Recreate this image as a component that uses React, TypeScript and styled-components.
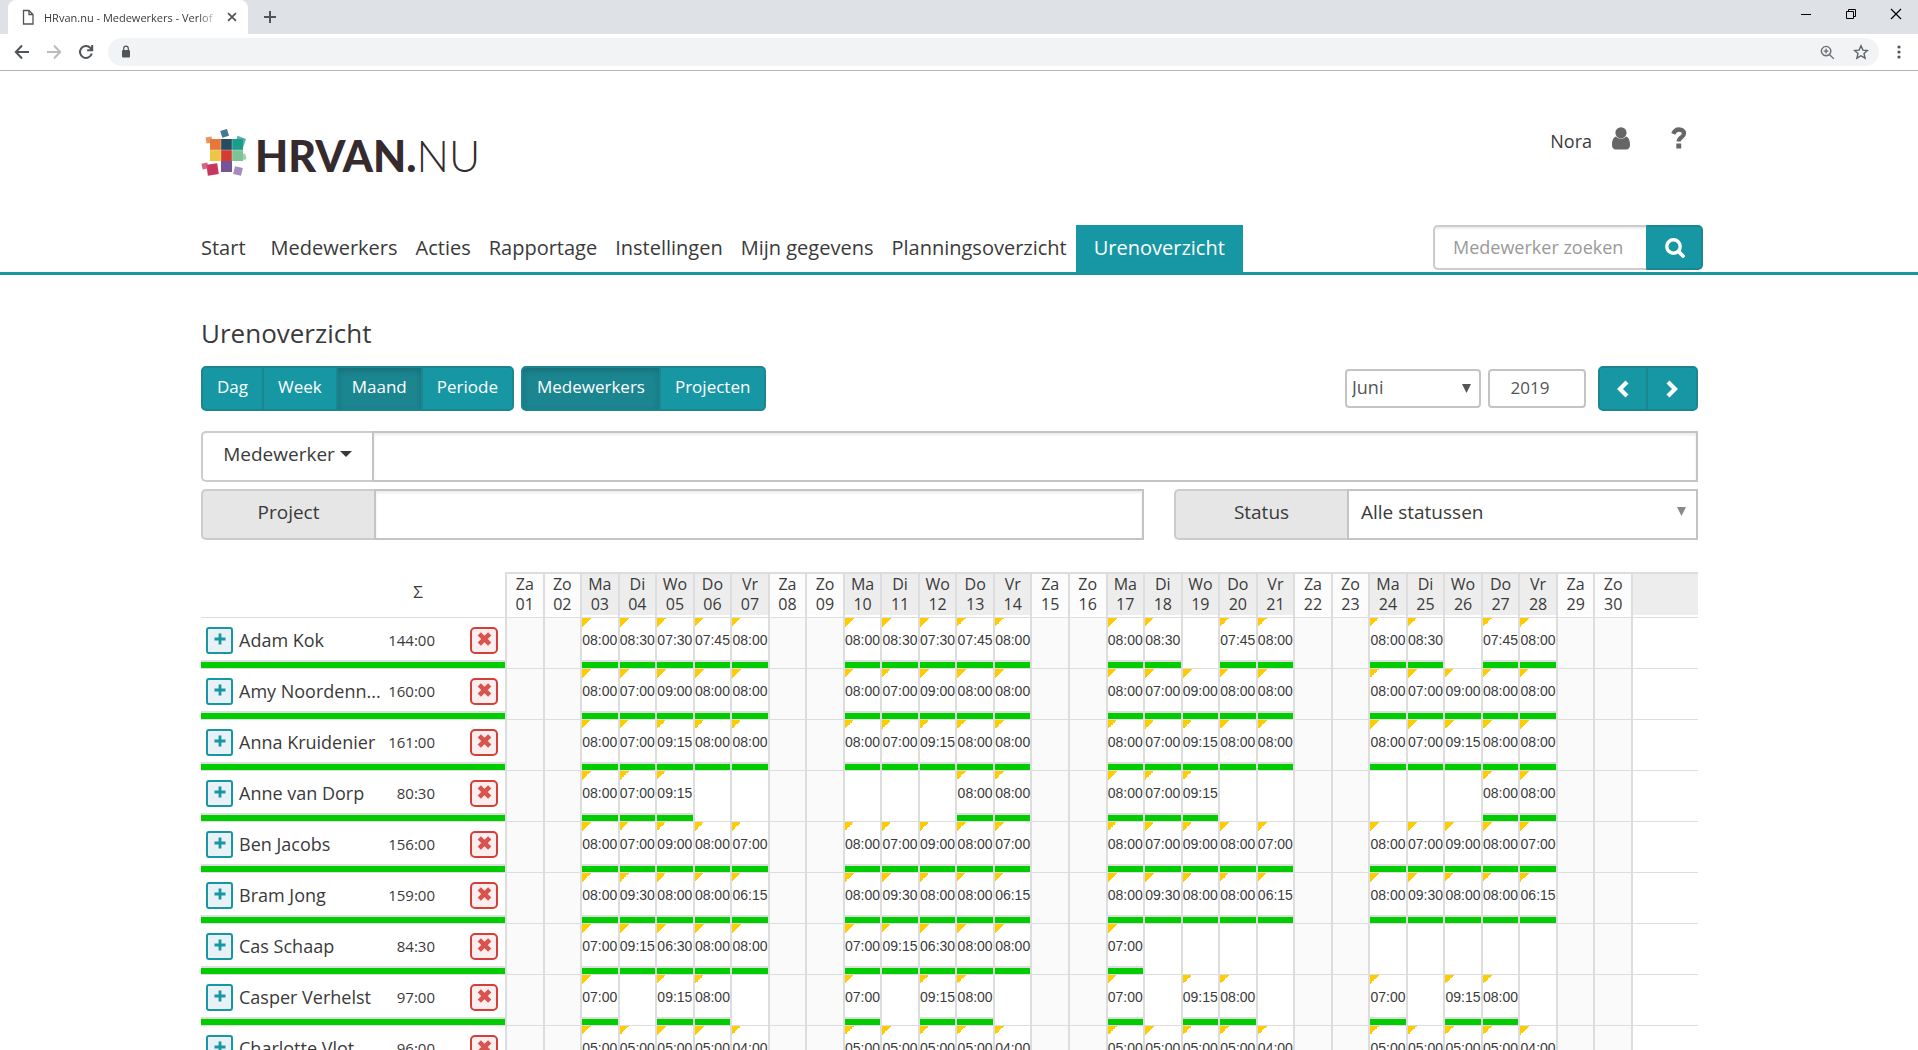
import React from 'react';
import styled, { createGlobalStyle } from 'styled-components';

const teal = '#1797a4';
const tealDark = '#1b8590';
const line = '#dddddd';
const field = '#c4c4c4';
const green = '#00cc00';
const ink = '#3a3a3a';

const GlobalStyle = createGlobalStyle`
  * { box-sizing: border-box; }
  body { margin: 0; background: #fff; color: ${ink}; font-family: "Open Sans", "Noto Sans", sans-serif; }
  button, input, select { font-family: inherit; color: inherit; }
`;

const Screen = styled.div`
  display: flex;
  flex-direction: column;
  height: 100vh;
  overflow: hidden;
`;

/* ---------- browser frame ---------- */
const TabStrip = styled.div`
  display: flex;
  align-items: stretch;
  height: 34px;
  flex: none;
  padding-left: 8px;
  background: #dee1e6;
`;
const Tab = styled.div`
  display: flex;
  align-items: center;
  width: 240px;
  padding: 0 9px 0 12px;
  background: #fff;
  border-radius: 8px 8px 0 0;
`;
const TabTitle = styled.span`
  flex: 1;
  margin: 0 6px 0 8px;
  overflow: hidden;
  white-space: nowrap;
  font-size: 11px;
  mask-image: linear-gradient(90deg, #000 88%, transparent);
`;
const ChromeButton = styled.button<{ $w: number }>`
  display: flex;
  align-items: center;
  justify-content: center;
  width: ${p => p.$w}px;
  padding: 0;
  border: 0;
  background: none;
`;
const WindowButtons = styled.div`
  display: flex;
  margin-left: auto;
  padding-bottom: 6px;
`;
const Toolbar = styled.div`
  display: flex;
  align-items: center;
  flex: none;
  height: 37px;
  padding-left: 6px;
  border-bottom: 1px solid #b4b4b4;
`;
const Address = styled.div`
  display: flex;
  align-items: center;
  justify-content: space-between;
  flex: 1;
  height: 28px;
  margin-left: 6px;
  padding: 0 1px 0 12px;
  border-radius: 14px;
  background: #f1f3f4;
`;
const AddressActions = styled.div`
  display: flex;
`;

/* ---------- page ---------- */
const Page = styled.main`
  flex: 1;
  min-height: 0;
  overflow: hidden;
`;
const Band = styled.div`
  padding-right: 19px;
`;
const Container = styled.div`
  max-width: 1497px;
  margin: 0 auto;
`;
const Header = styled(Container)`
  display: flex;
  justify-content: space-between;
  height: 154px;
  padding-top: 56px;
`;
const Logo = styled.a`
  display: flex;
  align-items: flex-start;
  gap: 8px;
  padding-top: 2px;
  color: #352b2e;
  text-decoration: none;
`;
const LogoText = styled.span`
  font-family: Lato, sans-serif;
  font-size: 43px;
  font-weight: 900;
  line-height: 54px;
`;
const LogoLight = styled.span`
  font-weight: 300;
`;
const UserArea = styled.div`
  display: flex;
  align-items: flex-start;
  gap: 20px;
`;
const UserLink = styled.a`
  display: flex;
  align-items: flex-start;
  gap: 20px;
  padding-right: 10px;
  color: #666;
  text-decoration: none;
`;
const UserName = styled.span`
  color: ${ink};
  font-size: 18px;
  line-height: 28px;
`;
const HelpButton = styled.button`
  display: flex;
  justify-content: center;
  width: 38px;
  padding: 0;
  border: 0;
  background: none;
  color: #666;
`;
const NavBand = styled(Band)`
  border-bottom: 3px solid ${teal};
`;
const NavRow = styled(Container)`
  display: flex;
  justify-content: space-between;
  height: 47px;
`;
const Nav = styled.nav`
  display: flex;
  margin-left: -9px;
`;
const NavLink = styled.a<{ $active?: boolean; $first?: boolean }>`
  padding: 0 ${p => (p.$active ? 18 : 9)}px;
  margin-right: ${p => (p.$first ? 7 : 0)}px;
  background: ${p => (p.$active ? teal : 'none')};
  color: ${p => (p.$active ? '#fff' : ink)};
  font-size: 20px;
  line-height: 46px;
  text-decoration: none;
  white-space: nowrap;
`;
const Search = styled.form`
  display: flex;
  width: 270px;
  height: 45px;
  margin-right: -5px;
`;
const SearchInput = styled.input`
  flex: 1;
  min-width: 0;
  padding: 0 18px 2px;
  border: 2px solid #ccc;
  border-right: 0;
  border-radius: 5px 0 0 5px;
  font-size: 18px;
  box-shadow: inset 0 2px 2px rgba(0, 0, 0, 0.07);
  &::placeholder { color: #999; }
`;
const SearchButton = styled.button`
  display: flex;
  align-items: center;
  justify-content: center;
  width: 57px;
  border: 2px solid ${tealDark};
  border-left-color: ${teal};
  border-radius: 0 5px 5px 0;
  background: ${teal};
  color: #fff;
`;

const Title = styled.h1`
  margin: 0;
  padding: 40px 0 15px;
  font-size: 26px;
  font-weight: 400;
  line-height: 36px;
`;
const Controls = styled.div`
  display: flex;
  align-items: center;
  gap: 7px;
  height: 45px;
  margin-bottom: 20px;
`;
const ButtonGroup = styled.div`
  display: flex;
  height: 45px;
  overflow: hidden;
  border: 2px solid ${tealDark};
  border-radius: 5px;
  background: ${teal};
`;
const GroupButton = styled.button<{ $active?: boolean; $square?: boolean }>`
  display: flex;
  align-items: center;
  justify-content: center;
  min-width: ${p => (p.$square ? 48 : 0)}px;
  padding: 0 ${p => (p.$square ? 0 : 14)}px ${p => (p.$square ? 0 : 4)}px;
  border: 0;
  border-right: 2px solid ${tealDark};
  background: ${p => (p.$active ? tealDark : teal)};
  box-shadow: ${p => (p.$active ? 'inset 0 3px 6px rgba(0,0,0,.16)' : 'none')};
  color: #fff;
  font-size: 17px;
  font-weight: 500;
  &:last-child { border-right: 0; }
`;
const PeriodPicker = styled.div`
  display: flex;
  align-items: center;
  gap: 7px;
  margin-left: auto;
`;
const NextPrev = styled(ButtonGroup)`
  margin-left: 5px;
`;
const SelectWrap = styled.div<{ $w?: number }>`
  position: relative;
  ${p => (p.$w ? `width: ${p.$w}px;` : 'flex: 1;')}
`;
const MonthSelect = styled.select`
  width: 100%;
  height: 39px;
  padding: 0 24px 3px 5px;
  border: 2px solid ${field};
  border-radius: 4px;
  appearance: none;
  background: #fff;
  color: #555;
  font-size: 18px;
`;
const Arrow = styled.span<{ $gray?: boolean }>`
  position: absolute;
  top: 0;
  bottom: 0;
  right: ${p => (p.$gray ? 12 : 10)}px;
  display: flex;
  align-items: center;
  padding-bottom: ${p => (p.$gray ? 6 : 0)}px;
  color: ${p => (p.$gray ? '#888' : '#555')};
  pointer-events: none;
`;
const YearInput = styled.input`
  width: 98px;
  height: 39px;
  padding: 0 14px 3px 0;
  border: 2px solid ${field};
  border-radius: 4px;
  color: #555;
  font-size: 17px;
  text-align: center;
`;

const Filters = styled.div`
  display: flex;
  flex-direction: column;
  gap: 7px;
  margin-bottom: 32px;
`;
const FilterRow = styled.div`
  display: flex;
  gap: 30px;
`;
const FilterGroup = styled.div<{ $w?: number }>`
  display: flex;
  height: 51px;
  ${p => (p.$w ? `flex: 0 0 ${p.$w}px;` : 'flex: 1;')}
  font-size: 19px;
`;
const Dropdown = styled.button`
  display: flex;
  align-items: center;
  justify-content: center;
  gap: 5px;
  width: 171px;
  padding: 0 0 6px;
  border: 2px solid #ccc;
  border-right: 0;
  border-radius: 5px 0 0 5px;
  background: #fff;
  font-size: 19px;
`;
const FilterLabel = styled.label`
  width: 173px;
  padding-bottom: 4px;
  border: 2px solid #ccc;
  border-right: 0;
  border-radius: 5px 0 0 5px;
  background: #e6e6e6;
  line-height: 43px;
  text-align: center;
`;
const FilterInput = styled.input`
  flex: 1;
  min-width: 0;
  padding: 0 12px;
  border: 2px solid ${field};
  border-radius: 0;
  font-size: 19px;
  box-shadow: inset 0 2px 3px rgba(0, 0, 0, 0.08);
`;
const StatusSelect = styled.select`
  width: 100%;
  height: 51px;
  padding: 0 24px 5px 12px;
  border: 2px solid ${field};
  border-radius: 0;
  appearance: none;
  background: #fff;
  font-size: 19px;
`;

/* ---------- hours table ---------- */
const Table = styled.table`
  width: 100%;
  table-layout: fixed;
  border-spacing: 0;
`;
const Col = styled.col<{ $w?: number }>`
  ${p => (p.$w ? `width: ${p.$w}px;` : '')}
`;
const Sum = styled.th`
  padding: 0 15px 6px 0;
  font-size: 17px;
  font-weight: 400;
  text-align: right;
`;
const LeftHead = styled.td`
  padding: 0;
`;
const DayHead = styled.th<{ $weekend?: boolean }>`
  height: 45px;
  padding: 0 0 2px;
  border-top: 2px solid ${line};
  border-left: 2px solid ${line};
  background: ${p => (p.$weekend ? '#fcfcfc' : '#ededed')};
  background-clip: padding-box;
  box-shadow: inset 0 -2px #fff;
  font-size: 16px;
  font-weight: 400;
  line-height: 20px;
  vertical-align: top;
`;
const NameCell = styled.th`
  padding: 0;
  border-top: 1px solid ${line};
  font-weight: 400;
  text-align: left;
`;
const PlainCell = styled.td`
  padding: 0;
  border-top: 1px solid ${line};
`;
const DayCell = styled.td<{ $weekend?: boolean }>`
  height: 51px;
  padding: 0;
  border-top: 1px solid ${line};
  border-left: 2px solid ${line};
  background: ${p => (p.$weekend ? '#fafafa' : '#fff')};
`;
const Marked = styled.div`
  display: flex;
  align-items: center;
  height: 50px;
  border-bottom: 6px solid ${green};
  box-shadow: inset 0 -2px ${line};
`;
const NameBox = styled(Marked)`
  gap: 6px;
  padding-left: 5px;
`;
const TotalBox = styled(Marked)`
  justify-content: flex-end;
  padding-right: 3px;
  font-size: 15px;
`;
const DeleteBox = styled(Marked)`
  justify-content: flex-end;
  padding-right: 7px;
`;
const HoursBox = styled(Marked)`
  justify-content: center;
  background: linear-gradient(to bottom right, #fc0 50%, transparent 50%) 0 0 / 9px 9px no-repeat;
  font-family: "Liberation Sans", Arial, sans-serif;
  font-size: 14px;
  white-space: nowrap;
`;
const Name = styled.span`
  white-space: nowrap;
  font-size: 18px;
  line-height: 26px;
`;
const SquareButton = styled.button<{ $danger?: boolean }>`
  display: flex;
  align-items: center;
  justify-content: center;
  flex: none;
  width: ${p => (p.$danger ? 28 : 27)}px;
  height: 27px;
  padding: 0 0 2px;
  border: 2px solid ${p => (p.$danger ? '#d43f3a' : teal)};
  border-radius: ${p => (p.$danger ? 5 : 3)}px;
  background: ${p => (p.$danger ? '#fbeeee' : '#e8f1f5')};
  color: ${p => (p.$danger ? '#d9534f' : teal)};
`;

/* ---------- drawings ---------- */
const LogoMark = () => (
  <svg width="46" height="48" viewBox="0 0 46 48" aria-hidden="true">
    <rect x="9" y="10" width="11" height="11" fill="#e8773a" />
    <rect x="20" y="10" width="11" height="11" fill="#274b5f" />
    <rect x="31" y="10" width="11" height="11" fill="#1c9c8b" />
    <rect x="9" y="21" width="11" height="11" fill="#eec643" />
    <rect x="20" y="21" width="11" height="11" fill="#d43c33" />
    <rect x="31" y="21" width="11" height="11" fill="#7fc294" />
    <rect x="20" y="32" width="11" height="11" fill="#75559a" />
    <rect x="20" y="1" width="7" height="7" fill="#437a92" transform="rotate(-17 23 4)" />
    <rect x="5" y="8" width="6" height="6" fill="#e8773a" opacity=".8" transform="rotate(-10 8 11)" />
    <rect x="35" y="8" width="9" height="9" fill="#1c9c8b" opacity=".75" transform="rotate(20 39 12)" />
    <rect x="39" y="25" width="6" height="6" fill="#7fc294" opacity=".75" transform="rotate(-12 42 28)" />
    <rect x="6" y="35" width="11" height="11" fill="#c9375f" transform="rotate(-8 11 40)" />
    <rect x="1" y="34" width="6" height="6" fill="#cf4a70" opacity=".85" transform="rotate(-12 4 37)" />
    <rect x="33" y="38" width="8" height="8" fill="#a58bc0" transform="rotate(14 37 42)" />
    <path d="M9 21H42M20 10V32M31 10V32" stroke="#fff" strokeOpacity=".3" fill="none" />
  </svg>
);
const UserIcon = () => (
  <svg width="18" height="23" viewBox="0 0 18 23" fill="currentColor" aria-hidden="true">
    <circle cx="9" cy="5.8" r="5.6" />
    <path d="M4 9.6C1.2 10.4 0 14 0 18c0 2.8 1.5 4.5 3.8 4.5h10.4c2.3 0 3.800-1.700 3.800-4.500 0-4-1.200-7.600-4-8.400-1.400 1.500-3 2.200-5 2.200s-3.600-.7-5-2.200z" />
  </svg>
);
const QuestionIcon = () => (
  <svg width="16" height="22" viewBox="0 0 16 22" aria-hidden="true">
    <path d="M2.200 6.800C3.500 3.800 5.200 2.500 8 2.500c2.800 0 5 1.500 5 4 0 4-5.300 3.800-5.300 8" fill="none" stroke="currentColor" strokeWidth="4.300" />
    <rect x="5.300" y="16.500" width="4.900" height="5" fill="currentColor" />
  </svg>
);
const SearchIcon = () => (
  <svg width="20" height="20" viewBox="0 0 20 20" fill="none" stroke="currentColor" aria-hidden="true">
    <circle cx="8.500" cy="8.500" r="6.700" strokeWidth="3.400" />
    <path d="M13.500 13.500l4.500 4.500" strokeWidth="3.800" strokeLinecap="round" />
  </svg>
);
const Chevron = ({ right }: { right?: boolean }) => (
  <svg width="14" height="18" viewBox="0 0 14 18" aria-hidden="true">
    <path d={right ? 'M3 2l7 7-7 7' : 'M11 2L4 9l7 7'} fill="none" stroke="currentColor" strokeWidth="4.200" />
  </svg>
);
const Triangle = ({ w, h }: { w: number; h: number }) => (
  <svg width={w} height={h} viewBox="0 0 10 10" preserveAspectRatio="none" aria-hidden="true">
    <path d="M0 0h10L5 10z" fill="currentColor" />
  </svg>
);
const PlusIcon = () => (
  <svg width="12" height="12" viewBox="0 0 12 12" aria-hidden="true">
    <path d="M6 0.500v11M0.500 6h11" stroke="currentColor" strokeWidth="2.800" />
  </svg>
);
const CrossIcon = () => (
  <svg width="15" height="14" viewBox="0 0 14 14" aria-hidden="true">
    <path d="M1.800 1.800l10.400 10.400M12.200 1.800L1.800 12.200" stroke="currentColor" strokeWidth="4.600" />
  </svg>
);
type StrokeProps = { d: string; size?: number; color?: string; width?: number };
const Stroke = ({ d, size = 16, color = '#50555a', width = 2 }: StrokeProps) => (
  <svg width={size} height={size} viewBox="0 0 16 16" fill="none" stroke={color} strokeWidth={width} aria-hidden="true">
    <path d={d} />
  </svg>
);

/* ---------- data ---------- */
const dayNames = ['Za', 'Zo', 'Ma', 'Di', 'Wo', 'Do', 'Vr'];
const days = Array.from({ length: 30 }, (_, i) => ({
  name: dayNames[i % 7],
  number: String(i + 1).padStart(2, '0'),
  weekend: i % 7 < 2,
}));

type Employee = { name: string; total: string; weeks: string[] };
const same = (w: string) => [w, w, w, w];
const employees: Employee[] = [
  { name: 'Adam Kok', total: '144:00', weeks: ['08:00 08:30 07:30 07:45 08:00', '08:00 08:30 07:30 07:45 08:00', '08:00 08:30 - 07:45 08:00', '08:00 08:30 - 07:45 08:00'] },
  { name: 'Amy Noordenn...', total: '160:00', weeks: same('08:00 07:00 09:00 08:00 08:00') },
  { name: 'Anna Kruidenier', total: '161:00', weeks: same('08:00 07:00 09:15 08:00 08:00') },
  { name: 'Anne van Dorp', total: '80:30', weeks: ['08:00 07:00 09:15 - -', '- - - 08:00 08:00', '08:00 07:00 09:15 - -', '- - - 08:00 08:00'] },
  { name: 'Ben Jacobs', total: '156:00', weeks: same('08:00 07:00 09:00 08:00 07:00') },
  { name: 'Bram Jong', total: '159:00', weeks: same('08:00 09:30 08:00 08:00 06:15') },
  { name: 'Cas Schaap', total: '84:30', weeks: ['07:00 09:15 06:30 08:00 08:00', '07:00 09:15 06:30 08:00 08:00', '07:00 - - - -', '- - - - -'] },
  { name: 'Casper Verhelst', total: '97:00', weeks: same('07:00 - 09:15 08:00 -') },
  { name: 'Charlotte Vlot', total: '96:00', weeks: same('05:00 05:00 05:00 05:00 04:00') },
];
const hoursOn = (e: Employee, day: number) => {
  const slot = day % 7;
  if (slot < 2) return '';
  const value = (e.weeks[Math.floor(day / 7)] ?? '').split(' ')[slot - 2];
  return value && value !== '-' ? value : '';
};
const navItems = ['Start', 'Medewerkers', 'Acties', 'Rapportage', 'Instellingen', 'Mijn gegevens', 'Planningsoverzicht', 'Urenoverzicht'];

const BrowserFrame = () => (
  <>
    <TabStrip>
      <Tab>
        <Stroke d="M3.500 1.500h5.500l4 4v9.500h-9.500zM9 1.500v4h4" width={1.3} />
        <TabTitle>HRvan.nu - Medewerkers - Verlof</TabTitle>
        <ChromeButton $w={14} aria-label="Tabblad sluiten"><Stroke d="M3.500 3.500l9 9M12.500 3.500l-9 9" size={14} /></ChromeButton>
      </Tab>
      <ChromeButton $w={44} aria-label="Nieuw tabblad"><Stroke d="M8 2v12M2 8h12" /></ChromeButton>
      <WindowButtons>
        <ChromeButton $w={45} aria-label="Minimaliseren"><Stroke d="M3 8.500h10" color="#000" width={1} /></ChromeButton>
        <ChromeButton $w={45} aria-label="Verkleinen"><Stroke d="M3.500 5.500h7v7h-7zM5.500 5.500v-2h7v7h-2" color="#000" width={1} /></ChromeButton>
        <ChromeButton $w={45} aria-label="Sluiten"><Stroke d="M3 3l10 10M13 3L3 13" color="#000" width={1.2} /></ChromeButton>
      </WindowButtons>
    </TabStrip>
    <Toolbar>
      <ChromeButton $w={32} aria-label="Terug"><Stroke d="M15 8H2M8 1.500L1.800 8 8 14.500" /></ChromeButton>
      <ChromeButton $w={32} aria-label="Vooruit"><Stroke d="M1 8h13M8 1.500L14.200 8 8 14.500" color="#b9bbbe" /></ChromeButton>
      <ChromeButton $w={32} aria-label="Vernieuwen"><Stroke d="M13.800 9.500A6 6 0 1 1 12.500 4l1.500 1.500M14.200 1v5.200H9.200" /></ChromeButton>
      <Address>
        <svg width="12" height="14" viewBox="0 0 12 14" aria-hidden="true">
          <rect x="2" y="5" width="8" height="7.500" rx="1" fill="#50555a" />
          <path d="M3.700 5.500V3.500a2.300 2.300 0 0 1 4.600 0v2" fill="none" stroke="#50555a" strokeWidth="1.200" />
        </svg>
        <AddressActions>
          <ChromeButton $w={34} aria-label="Zoomen"><Stroke d="M6.500 1.500a5 5 0 1 0 .01 0M10.300 10.300l4.500 4.500M6.500 4v5M4 6.500h5" width={1.500} color="#6a6f75" size={15} /></ChromeButton>
          <ChromeButton $w={34} aria-label="Bladwijzer"><Stroke d="M8 1.800l1.900 4.300 4.600.4-3.500 3.100 1.100 4.600L8 11.700l-4.100 2.500L5 9.600 1.500 6.500l4.600-.4z" width={1.400} color="#5f6368" /></ChromeButton>
        </AddressActions>
      </Address>
      <ChromeButton $w={39} aria-label="Menu">
        <svg width="4" height="14" viewBox="0 0 4 14" fill="#50555a" aria-hidden="true">
          <circle cx="2" cy="2" r="1.600" /><circle cx="2" cy="7" r="1.600" /><circle cx="2" cy="12" r="1.600" />
        </svg>
      </ChromeButton>
    </Toolbar>
  </>
);

const HoursTable = () => (
  <Table>
    <colgroup>
      <Col $w={182} />
      <Col $w={55} />
      <Col $w={67} />
      {days.map(d => <Col key={d.number} />)}
      <Col $w={67} />
    </colgroup>
    <thead>
      <tr>
        <LeftHead />
        <Sum scope="col">Σ</Sum>
        <LeftHead />
        {days.map(d => (
          <DayHead key={d.number} scope="col" $weekend={d.weekend}>{d.name}<br />{d.number}</DayHead>
        ))}
        <DayHead as="td" />
      </tr>
    </thead>
    <tbody>
      {employees.map(e => (
        <tr key={e.name}>
          <NameCell scope="row">
            <NameBox>
              <SquareButton aria-label={`${e.name} uitklappen`}><PlusIcon /></SquareButton>
              <Name>{e.name}</Name>
            </NameBox>
          </NameCell>
          <PlainCell><TotalBox>{e.total}</TotalBox></PlainCell>
          <PlainCell>
            <DeleteBox><SquareButton $danger aria-label={`${e.name} verwijderen`}><CrossIcon /></SquareButton></DeleteBox>
          </PlainCell>
          {days.map((d, i) => {
            const hours = hoursOn(e, i);
            return <DayCell key={d.number} $weekend={d.weekend}>{hours && <HoursBox>{hours}</HoursBox>}</DayCell>;
          })}
          <DayCell />
        </tr>
      ))}
    </tbody>
  </Table>
);

export default function App() {
  return (
    <Screen>
      <GlobalStyle />
      <BrowserFrame />
      <Page>
        <Band>
          <Header as="header">
            <Logo href="#" aria-label="HRVAN.NU">
              <LogoMark />
              <LogoText>HRVAN.<LogoLight>NU</LogoLight></LogoText>
            </Logo>
            <UserArea>
              <UserLink href="#">
                <UserName>Nora</UserName>
                <UserIcon />
              </UserLink>
              <HelpButton aria-label="Help"><QuestionIcon /></HelpButton>
            </UserArea>
          </Header>
        </Band>
        <NavBand>
          <NavRow>
            <Nav>
              {navItems.map((item, i) => (
                <NavLink key={item} href="#" $first={i === 0} $active={i === navItems.length - 1}>{item}</NavLink>
              ))}
            </Nav>
            <Search>
              <SearchInput aria-label="Medewerker zoeken" placeholder="Medewerker zoeken" />
              <SearchButton type="button" aria-label="Zoeken"><SearchIcon /></SearchButton>
            </Search>
          </NavRow>
        </NavBand>
        <Band>
          <Container>
            <Title>Urenoverzicht</Title>
            <Controls>
              <ButtonGroup>
                <GroupButton>Dag</GroupButton>
                <GroupButton>Week</GroupButton>
                <GroupButton $active>Maand</GroupButton>
                <GroupButton>Periode</GroupButton>
              </ButtonGroup>
              <ButtonGroup>
                <GroupButton $active>Medewerkers</GroupButton>
                <GroupButton>Projecten</GroupButton>
              </ButtonGroup>
              <PeriodPicker>
                <SelectWrap $w={136}>
                  <MonthSelect aria-label="Maand" defaultValue="Juni"><option>Juni</option></MonthSelect>
                  <Arrow><Triangle w={9} h={9} /></Arrow>
                </SelectWrap>
                <YearInput aria-label="Jaar" defaultValue="2019" />
                <NextPrev>
                  <GroupButton $square aria-label="Vorige"><Chevron /></GroupButton>
                  <GroupButton $square aria-label="Volgende"><Chevron right /></GroupButton>
                </NextPrev>
              </PeriodPicker>
            </Controls>
            <Filters>
              <FilterRow>
                <FilterGroup>
                  <Dropdown>Medewerker<Triangle w={12} h={6} /></Dropdown>
                  <FilterInput aria-label="Medewerker" />
                </FilterGroup>
              </FilterRow>
              <FilterRow>
                <FilterGroup>
                  <FilterLabel htmlFor="project">Project</FilterLabel>
                  <FilterInput id="project" />
                </FilterGroup>
                <FilterGroup $w={524}>
                  <FilterLabel htmlFor="status">Status</FilterLabel>
                  <SelectWrap>
                    <StatusSelect id="status" defaultValue="Alle statussen"><option>Alle statussen</option></StatusSelect>
                    <Arrow $gray><Triangle w={9} h={9} /></Arrow>
                  </SelectWrap>
                </FilterGroup>
              </FilterRow>
            </Filters>
            <HoursTable />
          </Container>
        </Band>
      </Page>
    </Screen>
  );
}
